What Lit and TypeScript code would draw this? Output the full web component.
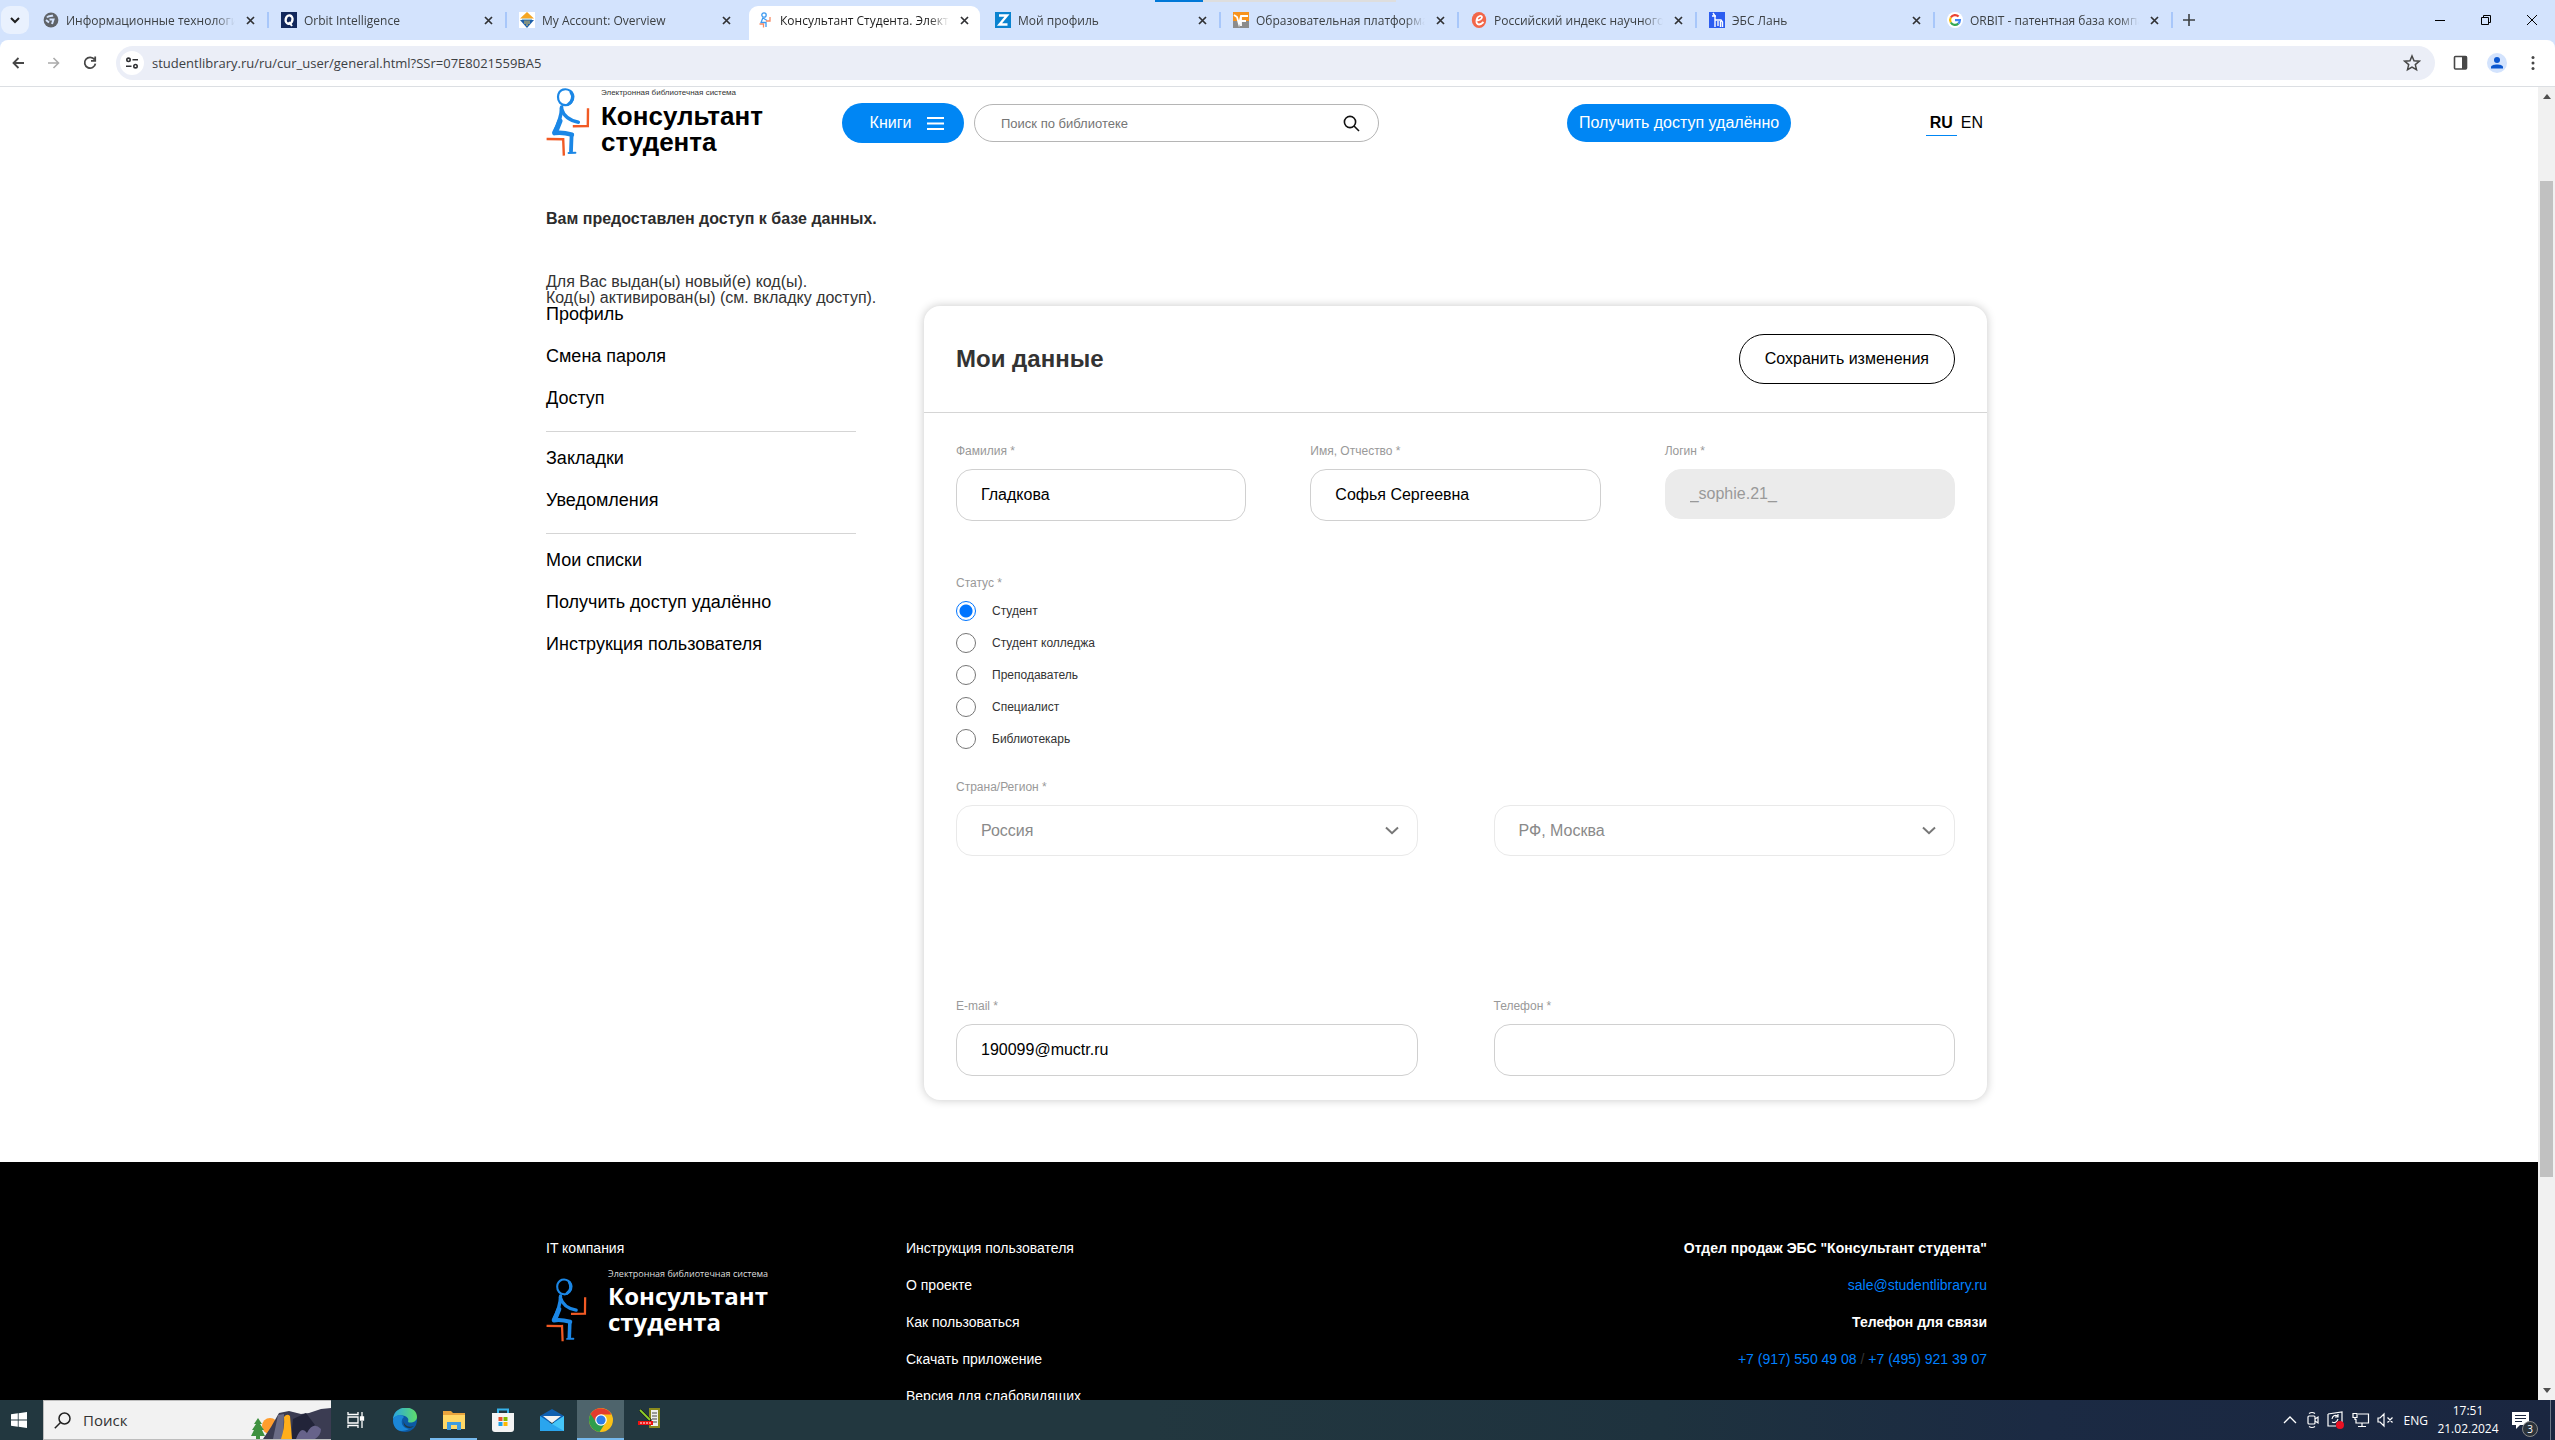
import { LitElement, html, css, svg, nothing } from "lit";
import { customElement } from "lit/decorators.js";
import { classMap } from "lit/directives/class-map.js";

const figure = html`<svg class="figure" width="44" height="70" viewBox="0 0 44 70" fill="none" aria-hidden="true">
  <g stroke="#1b87e6" stroke-linecap="round" stroke-linejoin="round">
    <path d="M17 2.6C22 1.2 27 4.6 27.4 9.6C27.6 14.6 23.6 18.4 19.4 18.2C15 18 11.8 14.4 12 9.8C12.2 6.4 14 3.8 17 2.6Z" stroke-width="2.2"/>
    <path d="M25 5.4C27.6 9 26.6 14.6 22.6 17" stroke-width="3"/>
    <path d="M15.6 20C15.6 28 13 36 8 45.4" stroke-width="3.6"/>
    <path d="M14 34L10 44" stroke-width="5"/>
    <path d="M15.4 21.6C17.6 29 23 33.6 32.4 35.2" stroke-width="3.4"/>
    <path d="M8.4 46.2C14 45 20 46 26 47.6" stroke-width="4.4"/>
    <path d="M25.6 48L25 64.4" stroke-width="3.8"/>
    <path d="M22.6 66L29.4 65.8" stroke-width="2"/>
  </g>
  <g stroke="#f15a24" stroke-linecap="square" stroke-width="2.4">
    <path d="M42 22.4L41.8 39M28 39.2L41.8 39"/>
    <path d="M1.8 52L17 52.2M17.2 52.2L17.8 67.4"/>
  </g>
</svg>`;

const globe = svg`<circle cx="8" cy="8" r="7.4" fill="#5f6368"/><path d="M4 5.5C6 3 8 4.500 10 3.500M6.500 7.500H10.500L9 12M3 8L6 10.500" stroke="#d3e3fd" stroke-width="2" fill="none"/>`;
const orbitQ = svg`<rect width="16" height="16" fill="#12285c"/><ellipse cx="8" cy="7.600" rx="3.400" ry="4.200" fill="none" stroke="#fff" stroke-width="2.400" transform="rotate(12 8 8)"/><path d="M8 10L11 14" stroke="#fff" stroke-width="2"/>`;
const account = svg`<rect width="16" height="16" fill="#fff"/><path d="M8 0L15 6.500H1Z" fill="#f5a623"/><path d="M1 8H15L8 16Z" fill="#1d5fa8"/><path d="M3 7.300H13" stroke="#7ab4d8"/><path d="M6 8.500V12M8 8.500V14M10 8.500V12" stroke="#e8c35a"/>`;
const student = svg`<g fill="none" stroke-width="1.300"><circle cx="7" cy="3" r="2.200" stroke="#3f9bf0"/><path d="M6 5.500L4 10.500H9V15M6 6L10 8.500" stroke="#3f9bf0"/><path d="M13 5V9H9M2.500 12H6.500V15.500" stroke="#f58a66"/></g>`;
const zed = svg`<rect width="16" height="16" fill="#0a83d0"/><path d="M4 3.500H12L4.500 12.500H12.500" fill="none" stroke="#fff" stroke-width="2.400"/>`;
const urait = svg`<rect width="16" height="9" fill="#f7931e"/><rect y="9" width="16" height="7" fill="#8c8c8c"/><path d="M1 3L4 5L6 12L8 4H15M8 9H13M8 4V14" fill="none" stroke="#fff" stroke-width="1.800"/>`;
const elib = svg`<ellipse cx="8" cy="8" rx="7.200" ry="8" fill="#f26649"/><path d="M5 8.800C13 7.500 11.500 3.300 8.800 4C5 5 4 12.500 8 12.500C10 12.500 11.500 11 12.500 10" fill="none" stroke="#fff" stroke-width="1.800"/>`;
const lan = svg`<rect width="16" height="16" fill="#2c5df0"/><path d="M4 1L6 4V8H12L13.500 10V15M6 8V15M9 9V14M11.500 9V15M3 4H7" fill="none" stroke="#fff" stroke-width="1.400"/>`;
const google = svg`<circle cx="8" cy="8" r="8" fill="#fff"/><g fill="none" stroke-width="2.200"><path d="M11.600 4.600A4.900 4.900 0 0 0 3.800 5.500" stroke="#ea4335"/><path d="M3.800 5.500A4.900 4.900 0 0 0 3.800 10.500" stroke="#fbbc05"/><path d="M3.800 10.500A4.900 4.900 0 0 0 11.300 11.600" stroke="#34a853"/><path d="M11.300 11.600A4.900 4.900 0 0 0 12.900 8.200H8" stroke="#4285f4"/></g>`;

const tabs = [
  { title: "Информационные технологии", icon: globe, line: true },
  { title: "Orbit Intelligence", icon: orbitQ, line: true },
  { title: "My Account: Overview", icon: account, line: false },
  { title: "Консультант Студента. Электро", icon: student, line: false, active: true },
  { title: "Мой профиль", icon: zed, line: true },
  { title: "Образовательная платформа Ю", icon: urait, line: true },
  { title: "Российский индекс научного ц", icon: elib, line: true },
  { title: "ЭБС Лань", icon: lan, line: true },
  { title: "ORBIT - патентная база компа", icon: google, line: true },
];

const reset = css`
  * { box-sizing: border-box; }
  button { border: 0; background: none; padding: 0; margin: 0; font: inherit; color: inherit; display: flex; align-items: center; justify-content: center; }
  a { color: inherit; text-decoration: none; }
  svg { display: block; flex: none; }
`;

@customElement("browser-chrome")
export class BrowserChrome extends LitElement {
  static styles = [reset, css`
    :host { display: block; font-family: "Open Sans", "Noto Sans", sans-serif; font-size: 12px; color: #3c4043; background: #d3e3fd; position: relative; }
    .progress { position: absolute; top: 0; left: 1155px; width: 241px; height: 2px; background: linear-gradient(90deg, #0078d7 20%, #dedede 20%); }
    .strip { display: flex; align-items: center; height: 40px; }
    .search-tabs { width: 28px; height: 28px; margin: 0 2px 0 1px; border-radius: 9px; background: #e9f1fe; }
    .tab { width: 238px; height: 40px; position: relative; display: flex; align-items: center; padding: 0 11px 0 12px; gap: 7px; }
    .tab.active { color: #1f1f1f; }
    .tab.active::before { content: ""; position: absolute; z-index: 0; inset: 6px 3px 0 4px; background: #fff; border-radius: 9px 9px 0 0; }
    .tab > * { position: relative; }
    .tab.line::after { content: ""; position: absolute; right: 0; top: 12px; width: 2px; height: 16px; background: #a8c7fa; }
    .title { flex: 1; min-width: 0; overflow: hidden; white-space: nowrap; mask-image: linear-gradient(90deg, #000 88%, transparent); }
    .close { width: 16px; height: 16px; }
    .new { width: 32px; height: 28px; }
    .windows { margin-left: auto; display: flex; }
    .windows button { width: 46px; height: 40px; }
    .bar { display: flex; align-items: center; height: 47px; background: #fff; border-bottom: 1px solid #dcdfe3; border-radius: 8px 8px 0 0; color: #474747; padding-bottom: 1px; }
    .nav { display: flex; width: 116px; }
    .nav button { width: 36px; height: 32px; }
    .omni { flex: 1; display: flex; align-items: center; height: 34px; border-radius: 17px; background: #ebeef7; padding: 0 14px 0 4px; gap: 8px; }
    .site { width: 24px; height: 24px; border-radius: 50%; background: #fff; }
    .url { flex: 1; border: 0; outline: 0; padding: 0; background: none; font: 13px "Open Sans", "Noto Sans", sans-serif; color: #3c4043; }
    .tools { display: flex; margin: 0 4px 0 8px; }
    .tools button { width: 36px; height: 32px; }
  `];

  render() {
    return html`
      <div class="progress"></div>
      <div class="strip" role="tablist">
        <button class="search-tabs" aria-label="Поиск вкладок"><svg width="10" height="8" viewBox="0 0 10 8" fill="none" stroke="#1f1f1f" stroke-width="2"><path d="M1 2L5 6L9 2"/></svg></button>
        ${tabs.map(t => html`<div role="tab" class=${classMap({ tab: true, active: !!t.active, line: t.line })}>
          <svg width="16" height="16" viewBox="0 0 16 16">${t.icon}</svg>
          <span class="title">${t.title}</span>
          <button class="close" aria-label="Закрыть"><svg width="9" height="9" viewBox="0 0 9 9" stroke="#303134" stroke-width="1.700"><path d="M1 1L8 8M8 1L1 8"/></svg></button>
        </div>`)}
        <button class="new" aria-label="Новая вкладка"><svg width="12" height="12" viewBox="0 0 12 12" stroke="#3c4043" stroke-width="1.600"><path d="M6 0V12M0 6H12"/></svg></button>
        <div class="windows">
          <button aria-label="Свернуть"><svg width="10" height="10" viewBox="0 0 10 10" stroke="#000"><path d="M0 5.500H10"/></svg></button>
          <button aria-label="Восстановить"><svg width="10" height="10" viewBox="0 0 10 10" fill="none" stroke="#000"><path d="M.5 2.500H7.500V9.500H.5ZM2.500 2.500V.5H9.500V7.500H7.500"/></svg></button>
          <button aria-label="Закрыть окно"><svg width="10" height="10" viewBox="0 0 10 10" stroke="#000"><path d="M0 0L10 10M10 0L0 10"/></svg></button>
        </div>
      </div>
      <div class="bar">
        <div class="nav">
          <button aria-label="Назад"><svg width="12" height="12" viewBox="0 0 12 12" fill="none" stroke="#474747" stroke-width="1.800"><path d="M12 6H1.500M6.500 1L1.500 6L6.500 11"/></svg></button>
          <button aria-label="Вперёд"><svg width="12" height="12" viewBox="0 0 12 12" fill="none" stroke="#ababab" stroke-width="1.600"><path d="M0 6H10.500M5.500 1L10.500 6L5.500 11"/></svg></button>
          <button aria-label="Обновить"><svg width="14" height="14" viewBox="0 0 14 14" fill="none" stroke="#474747" stroke-width="1.800"><path d="M11.500 3.600A5.400 5.400 0 1 0 12.400 7.600M12.200 .6V4.800H8"/></svg></button>
        </div>
        <div class="omni">
          <button class="site" aria-label="Сведения о сайте"><svg width="14" height="12" viewBox="0 0 14 12" fill="none" stroke="#303134" stroke-width="1.600"><circle cx="3.500" cy="2.800" r="1.700"/><path d="M7.500 2.800H13M1 9.200H6.500"/><circle cx="10.500" cy="9.200" r="1.700"/></svg></button>
          <input class="url" aria-label="Адрес" .value=${"studentlibrary.ru/ru/cur_user/general.html?SSr=07E8021559BA5"}>
          <button aria-label="В закладки"><svg width="18" height="18" viewBox="0 0 18 18" fill="none" stroke="#474747" stroke-width="1.500"><path d="M9 2L11 6.800L16.200 7.200L12.300 10.600L13.500 15.700L9 13L4.500 15.700L5.700 10.600L1.800 7.200L7 6.800Z"/></svg></button>
        </div>
        <div class="tools">
          <button aria-label="Боковая панель"><svg width="16" height="16" viewBox="0 0 16 16"><rect x="1.500" y="1.500" width="12" height="12.500" rx="1" fill="none" stroke="#474747" stroke-width="1.600"/><path d="M9 1.500H14V14H9Z" fill="#474747"/></svg></button>
          <button aria-label="Профиль"><svg width="20" height="20" viewBox="0 0 20 20"><circle cx="10" cy="10" r="10" fill="#d3e3fd"/><circle cx="10" cy="7" r="3" fill="#0b57d0"/><path d="M4 15.500V14C4 10.500 16 10.500 16 14V15.500Z" fill="#0b57d0"/></svg></button>
          <button aria-label="Меню"><svg width="4" height="16" viewBox="0 0 4 16" fill="#474747"><circle cx="2" cy="2.600" r="1.500"/><circle cx="2" cy="8" r="1.500"/><circle cx="2" cy="13.400" r="1.500"/></svg></button>
        </div>
      </div>`;
  }
}

const statuses = ["Студент", "Студент колледжа", "Преподаватель", "Специалист", "Библиотекарь"];
const menu = [
  ["Профиль", "Смена пароля", "Доступ"],
  ["Закладки", "Уведомления"],
  ["Мои списки", "Получить доступ удалённо", "Инструкция пользователя"],
];
const footerLinks = ["Инструкция пользователя", "О проекте", "Как пользоваться", "Скачать приложение", "Версия для слабовидящих"];

@customElement("library-page")
export class LibraryPage extends LitElement {
  static styles = [reset, css`
    :host { display: block; font-family: "Liberation Sans", Arial, sans-serif; font-size: 16px; color: #333; background: #fff; }
    .wrap { width: 100%; max-width: 1441px; margin: 0 auto; }
    .gutter { padding-right: 5px; }
    header { display: flex; align-items: flex-start; height: 124px; }
    .logo { display: flex; color: #000; width: 296px; gap: 11px; }
    .brand { display: flex; flex-direction: column; font-weight: bold; font-size: 26px; line-height: 26px; }
    .brand small { font-weight: normal; font-size: 8px; line-height: 12px; color: #333; padding-bottom: 4px; }
    .books { width: 122px; height: 40px; margin-top: 16px; padding-left: 8px; border-radius: 20px; background: #0086f4; color: #fff; gap: 16px; }
    .find { display: flex; align-items: center; width: 405px; height: 38px; margin: 17px 0 0 10px; padding: 0 18px 0 26px; border: 1px solid #b5b5b5; border-radius: 19px; }
    .find input { flex: 1; min-width: 0; border: 0; outline: 0; padding: 0; background: none; font: 13px "Liberation Sans", Arial, sans-serif; }
    .find input::placeholder { color: #757575; opacity: 1; }
    .remote { height: 38px; margin: 17px 0 0 188px; padding: 0 12px; border-radius: 19px; background: #0086f4; color: #fff; white-space: nowrap; }
    .lang { display: flex; margin: 23px 4px 0 auto; line-height: 25px; color: #000; gap: 4px; }
    .lang .on { font-weight: bold; padding: 0 4px; border-bottom: 1px solid #0086f4; }
    .notice { margin: 0 0 47px; font-size: 16px; line-height: 16px; color: #2c2c2c; }
    .codes { margin: 0; line-height: 16px; }
    .columns { display: grid; grid-template-columns: 310px minmax(0, 1fr); gap: 68px; align-items: start; }
    nav { font-size: 18px; color: #000; }
    .group { display: flex; flex-direction: column; gap: 26px; line-height: 16px; padding-bottom: 25px; white-space: nowrap; }
    .group + .group { border-top: 1px solid #d5d5d5; padding-top: 18px; }
    .card { border-radius: 16px; background: #fff; box-shadow: 0 0 10px rgba(0, 0, 0, .22); }
    .head { display: flex; align-items: center; justify-content: space-between; height: 107px; padding: 0 32px; border-bottom: 1px solid #d5d5d5; }
    h1 { margin: 0; font-size: 24px; }
    .save { height: 50px; padding: 0 25px; border: 1px solid #000; border-radius: 25px; color: #000; }
    .body { padding: 31px 32px 24px; }
    .three { display: grid; grid-template-columns: repeat(3, minmax(0, 1fr)); gap: 64px; }
    .two { display: grid; grid-template-columns: repeat(2, minmax(0, 1fr)); gap: 76px; align-items: end; }
    .label { display: block; padding: 0; margin: 0 0 11px; font-size: 12px; line-height: 14px; color: #999; }
    .field { display: block; width: 100%; height: 52px; padding: 0 24px; border: 1px solid #d0d0d0; border-radius: 16px; background: #fff; font: 16px "Liberation Sans", Arial, sans-serif; color: #000; outline: 0; }
    .field:disabled { height: 50px; border-color: #ebebeb; background: #ebebeb; color: #999; }
    fieldset { border: 0; margin: 55px 0 31px; padding: 0; display: flex; flex-direction: column; gap: 12px; }
    .radio { display: flex; align-items: center; height: 20px; gap: 16px; font-size: 12px; color: #333; }
    .radio input { appearance: none; width: 20px; height: 20px; margin: 0; border: 1px solid #767676; border-radius: 50%; }
    .radio input:checked { border-color: #0075ff; background: radial-gradient(circle, #0075ff 0 6px, #fff 7px); }
    .pick { display: grid; align-items: center; }
    .pick > * { grid-area: 1 / 1; }
    .pick select:disabled { appearance: none; height: 51px; opacity: 1; background: #fff; color: #8a8a8a; border-color: #e9e9e9; }
    .pick svg { justify-self: end; margin-right: 19px; pointer-events: none; }
    .contact { margin-top: 143px; }
    footer { margin-top: 62px; padding-top: 68px; padding-right: 5px; background: #000; color: #fff; font-size: 14px; line-height: 37px; min-height: 280px; }
    .foot { display: grid; grid-template-columns: 360px 1fr auto; }
    .foot p, .foot ul { margin: 0; padding: 0; list-style: none; }
    .flogo { display: flex; gap: 21px; align-items: flex-start; font-family: "Open Sans", "Noto Sans", sans-serif; }
    .flogo .figure { width: 41px; height: 66px; margin-top: 10px; }
    .flogo .brand { font-size: 24px; }
    .flogo .brand small { color: #ddd; font-size: 9px; line-height: 14px; padding-bottom: 2px; }
    .sales { text-align: right; color: #333; }
    .sales b { color: #fff; }
    .sales a { color: #0080ff; }
  `];

  render() {
    return html`
      <div class="gutter"><div class="wrap">
        <header>
          <a class="logo" href="#">${figure}<span class="brand"><small>Электронная библиотечная система</small><span>Консультант</span><span>студента</span></span></a>
          <button class="books">Книги <svg width="17" height="13" viewBox="0 0 17 13" stroke="#fff" stroke-width="2"><path d="M0 1H17M0 6.500H17M0 12H17"/></svg></button>
          <form class="find"><input type="search" aria-label="Поиск по библиотеке" placeholder="Поиск по библиотеке">
            <button type="button" aria-label="Найти"><svg width="17" height="17" viewBox="0 0 17 17" fill="none" stroke="#111" stroke-width="1.600"><circle cx="7" cy="7" r="5.600"/><path d="M11 11L16 16"/></svg></button></form>
          <button class="remote">Получить доступ удалённо</button>
          <div class="lang"><a class="on" href="#">RU</a><a href="#">EN</a></div>
        </header>
        <h2 class="notice">Вам предоставлен доступ к базе данных.</h2>
        <p class="codes">Для Вас выдан(ы) новый(е) код(ы).<br>Код(ы) активирован(ы) (см. вкладку доступ).</p>
        <div class="columns">
          <nav>${menu.map(g => html`<div class="group">${g.map(l => html`<a href="#">${l}</a>`)}</div>`)}</nav>
          <form class="card">
            <div class="head"><h1>Мои данные</h1><button type="button" class="save">Сохранить изменения</button></div>
            <div class="body">
              <div class="three">
                <div><label class="label" for="surname">Фамилия *</label><input class="field" id="surname" .value=${"Гладкова"}></div>
                <div><label class="label" for="name">Имя, Отчество *</label><input class="field" id="name" .value=${"Софья Сергеевна"}></div>
                <div><label class="label" for="login">Логин *</label><input class="field" id="login" disabled .value=${"_sophie.21_"}></div>
              </div>
              <fieldset><legend class="label">Статус *</legend>
                ${statuses.map((s, i) => html`<label class="radio"><input type="radio" name="status" ?checked=${i === 0}>${s}</label>`)}
              </fieldset>
              <div class="two">
                <div><label class="label" for="country">Страна/Регион *</label>${this.pick("country", "Россия")}</div>
                ${this.pick("region", "РФ, Москва", "Регион")}
              </div>
              <div class="two contact">
                <div><label class="label" for="email">E-mail *</label><input class="field" id="email" type="email" .value=${"190099@muctr.ru"}></div>
                <div><label class="label" for="phone">Телефон *</label><input class="field" id="phone" type="tel"></div>
              </div>
            </div>
          </form>
        </div>
      </div></div>
      <footer><div class="wrap foot">
        <div><p>IT компания</p><a class="flogo" href="#">${figure}<span class="brand"><small>Электронная библиотечная система</small><span>Консультант</span><span>студента</span></span></a></div>
        <ul>${footerLinks.map(l => html`<li><a href="#">${l}</a></li>`)}</ul>
        <div class="sales"><p><b>Отдел продаж ЭБС "Консультант студента"</b></p><p><a href="#">sale@studentlibrary.ru</a></p><p><b>Телефон для связи</b></p><p><a href="#">+7 (917) 550 49 08</a> / <a href="#">+7 (495) 921 39 07</a></p></div>
      </div></footer>`;
  }

  private pick(id: string, value: string, name?: string) {
    return html`<div class="pick"><select class="field" id=${id} disabled aria-label=${name ?? nothing}><option>${value}</option></select>
      <svg width="14" height="9" viewBox="0 0 14 9" fill="none" stroke="#777" stroke-width="2"><path d="M1 1.500L7 7.200L13 1.500"/></svg></div>`;
  }
}

const apps = [
  { name: "Edge", icon: svg`<defs><linearGradient id="e1" x1="0" y1="0" x2="1" y2="0"><stop offset="0" stop-color="#2aa5e0"/><stop offset="1" stop-color="#5fdc6a"/></linearGradient></defs><circle cx="12" cy="12" r="12" fill="#0c59a4"/><path d="M0 12C0-4 24-4 24 9C24 13 20 15 16 14.500C14 14 16 12.500 15 10.500C12 6 2 6 0 12Z" fill="url(#e1)"/><path d="M0 12C2 6 9 6 11 9C7 12 8 20 16 21C4 27 0 18 0 12Z" fill="#1b86d6"/><path d="M11 12C10 17 15 20 21 18C17 22 9 20 11 12Z" fill="#22373f"/>` },
  { name: "Проводник", open: true, icon: svg`<path d="M1 3H9L11 5H23V21H1Z" fill="#e8a33d"/><path d="M1 7H23V21H1Z" fill="#ffd766"/><path d="M5 22V14H19V22H15V17H9V22Z" fill="#3e9be0"/>` },
  { name: "Store", icon: svg`<path d="M7 6V1.500H17V6" fill="none" stroke="#35b2ea" stroke-width="2"/><path d="M1 5H23V21Q23 24 20 24H4Q1 24 1 21Z" fill="#f4f4f4"/><path d="M7.500 9H11.500V13H7.500Z" fill="#e8502d"/><path d="M12.500 9H16.500V13H12.500Z" fill="#7fba00"/><path d="M7.500 14H11.500V18H7.500Z" fill="#1ba1e8"/><path d="M12.500 14H16.500V18H12.500Z" fill="#ffb900"/>` },
  { name: "Почта", icon: svg`<path d="M0 8L12 1L24 8V14H0Z" fill="#0f5fb0"/><path d="M0 8V23H24V8L12 16Z" fill="#2aa5ee"/><path d="M24 8L12 16L24 23Z" fill="#45c5f8"/><path d="M3 8H21L12 15Z" fill="#f2f2f2"/>` },
  { name: "Chrome", open: true, active: true, icon: svg`<circle cx="12" cy="12" r="12" fill="#fbc116"/><path d="M12 12L1.600 6A12 12 0 0 0 10.500 23.900L17 14Z" fill="#2f9e4c"/><path d="M1.600 6A12 12 0 0 1 22.400 6.500H12L7 14Z" fill="#e33b2e"/><circle cx="12" cy="12" r="5.800" fill="#fff"/><circle cx="12" cy="12" r="4.600" fill="#2f7de9"/>` },
  { name: "Редактор", icon: svg`<rect x="12" y="1" width="9" height="18" fill="#eee" stroke="#8a8a1c" stroke-width="2"/><path d="M14 5H19M14 8H19M14 11H19M14 14H19" stroke="#444"/><path d="M2 2L13 13" stroke="#111" stroke-width="3"/><path d="M2 2L12 12" stroke="#8fd12a" stroke-width="1.800"/><rect y="13" width="15" height="4" fill="#e11"/><path d="M2 15H13" stroke="#fff" stroke-dasharray="2 1"/>` },
];

@customElement("task-bar")
export class TaskBar extends LitElement {
  static styles = [reset, css`
    :host { display: flex; align-items: stretch; height: 40px; color: #fff; font: 12px "Open Sans", "Noto Sans", sans-serif; background: linear-gradient(90deg, #22373f, #22373f 45%, #1e323e 65%, #1b2a43 80%, #1a2640); }
    .start { width: 43px; padding-right: 5px; }
    .search { display: flex; align-items: center; width: 288px; padding-left: 10px; gap: 12px; background: #f2f2f2; border: 1px solid #bdbdbd; border-right: 0; overflow: hidden; }
    .search input { flex: 1; min-width: 0; border: 0; outline: 0; padding: 0; background: none; font: 15px "Open Sans", "Noto Sans", sans-serif; }
    .search input::placeholder { color: #333; opacity: 1; }
    .apps { display: flex; gap: 2px; padding-left: 1px; }
    .apps button { width: 47px; border-bottom: 2px solid transparent; border-top: 2px solid transparent; }
    .apps .open { border-bottom-color: #76b9ed; }
    .apps .active { background: #4e646c; border-top-color: #4e646c; }
    .tray { margin-left: auto; display: flex; align-items: center; gap: 7px; }
    .lang { margin: 0 2px; }
    .clock { text-align: center; line-height: 18px; width: 62px; }
    .note { margin: 0 14px 0 6px; position: relative; }
    .count { position: absolute; right: -9px; bottom: -8px; width: 16px; height: 16px; border-radius: 50%; border: 1px solid #888; background: #2b333b; font-size: 10px; line-height: 14px; text-align: center; }
    .edge { width: 5px; align-self: stretch; border-left: 1px solid #6d7787; }
  `];

  render() {
    return html`
      <button class="start" aria-label="Пуск"><svg width="16" height="16" viewBox="0 0 16 16" fill="#fff"><path d="M0 2.300L6.800 1.300V7.600H0ZM7.600 1.200L16 0V7.600H7.600ZM0 8.400H6.800V14.700L0 13.700ZM7.600 8.400H16V16L7.600 14.800Z"/></svg></button>
      <label class="search"><svg width="17" height="17" viewBox="0 0 17 17" fill="none" stroke="#222" stroke-width="1.500"><circle cx="10.500" cy="6.500" r="5.500"/><path d="M6.500 10.500L.8 16.200"/></svg>
        <input aria-label="Поиск" placeholder="Поиск">
        <svg width="80" height="38" viewBox="0 0 80 38"><circle cx="19" cy="25" r="8" fill="#ff9d2e"/><path d="M12 38L20 26L28 12L38 10L50 13L58 12L70 8L80 7V38Z" fill="#3b3c52"/><path d="M27 14L22 38H32L33 13Z" fill="#6b6c86"/><path d="M42 18L55 12L64 24L50 38H40Z" fill="#222439"/><path d="M33 16Q36 12 39 15L41 38H30Q34 26 33 16Z" fill="#ffae1a"/><path d="M45 38Q50 24 56 32Q62 20 70 28Q70 34 64 38Z" fill="#67638a"/><path d="M7 17L11 23H9L13 29H11L14 35H9V38H5V35H0L3 29H1L5 23H3Z" fill="#3f9140"/></svg>
      </label>
      <div class="apps">
        <button aria-label="Представление задач"><svg width="18" height="16" viewBox="0 0 18 16" fill="none" stroke="#fff" stroke-width="1.300"><path d="M1 0V2.500H11V0M1 5H11V11H1ZM1 16V13.500H11V16M15 0V5M15 9V16"/><path d="M13.500 5H16.500V8H13.500Z" fill="#fff"/></svg></button>
        ${apps.map(a => html`<button aria-label=${a.name} class=${classMap({ open: !!a.open, active: !!a.active })}><svg width="24" height="24" viewBox="0 0 24 24">${a.icon}</svg></button>`)}
      </div>
      <div class="tray">
        <svg width="14" height="16" viewBox="0 0 14 16" fill="none" stroke="#fff" stroke-width="1.300"><path d="M1 11L7 5L13 11"/></svg>
        <svg width="16" height="18" viewBox="0 0 16 18" fill="none" stroke="#fff" stroke-width="1.200"><rect x="4" y="5" width="7" height="8" rx="1"/><path d="M11 8L14 6V12L11 10M5 2.500Q8 .5 11 2.500M5 15.500Q8 17.500 11 15.500"/></svg>
        <svg width="18" height="18" viewBox="0 0 18 18" fill="none" stroke="#fff" stroke-width="1.200"><path d="M1 3L15 1V13M1 3V15H9M11 5Q6 3 5 8M5 11Q9 13 11 8M11 3V6H8"/><circle cx="13" cy="14" r="4" fill="#e81123" stroke="none"/></svg>
        <svg width="18" height="16" viewBox="0 0 18 16" fill="none" stroke="#fff" stroke-width="1.200"><path d="M6 2H16.500V11H4V7M10 11V14.500M6 14.500H14M1 1.500H5V5.500H1ZM3 5.500V8"/></svg>
        <svg width="18" height="16" viewBox="0 0 18 16" fill="none" stroke="#fff" stroke-width="1.200"><path d="M1 6H3L7 2V14L3 10H1ZM10.500 5.500L15.500 10.500M15.500 5.500L10.500 10.500"/></svg>
        <span class="lang">ENG</span>
        <div class="clock">17:51<br>21.02.2024</div>
        <div class="note"><svg width="17" height="17" viewBox="0 0 17 17"><path d="M0 0H17V13H8L4 17V13H0Z" fill="#fff"/><path d="M3 3.500H14M3 6.500H14M3 9.500H10" stroke="#1a2640" stroke-width="1.200"/></svg><span class="count">3</span></div>
        <div class="edge"></div>
      </div>`;
  }
}

@customElement("app-root")
export class AppRoot extends LitElement {
  static styles = css`
    :host { display: flex; flex-direction: column; height: 100vh; overflow: hidden; }
    browser-chrome, task-bar { flex: none; }
    .view { flex: 1; min-height: 0; display: flex; overflow: hidden; }
    library-page { flex: 1; min-width: 0; }
    .scroll { width: 17px; flex: none; display: flex; flex-direction: column; align-items: center; background: #f1f1f1; padding: 6px 0; }
    .arrow { border: 4px solid transparent; border-top: 0; border-bottom: 5px solid #505050; margin: 1px 0; }
    .arrow.down { transform: rotate(180deg); }
    .track { flex: 1; display: grid; grid-template-rows: 81fr 998fr 210fr; }
    .thumb { grid-row: 2; width: 13px; background: #c1c1c1; }
  `;

  render() {
    return html`<browser-chrome></browser-chrome>
      <div class="view"><library-page></library-page>
        <div class="scroll"><span class="arrow"></span><div class="track"><div class="thumb"></div></div><span class="arrow down"></span></div>
      </div>
      <task-bar></task-bar>`;
  }
}
